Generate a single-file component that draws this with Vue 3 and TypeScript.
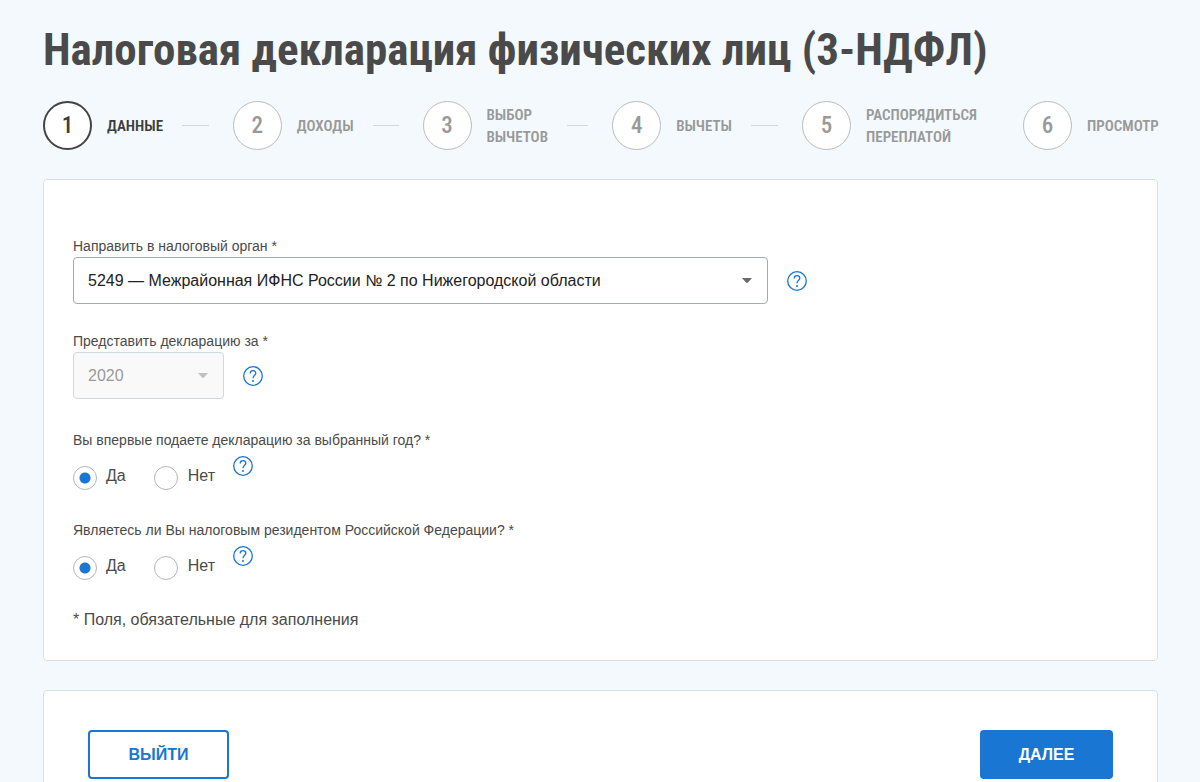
<script setup lang="ts">
import { ref } from 'vue'

interface Step {
  id: number
  lines: string[]
}

interface Question {
  name: string
  text: string
}

const steps: Step[] = [
  { id: 1, lines: ['Данные'] },
  { id: 2, lines: ['Доходы'] },
  { id: 3, lines: ['Выбор', 'вычетов'] },
  { id: 4, lines: ['Вычеты'] },
  { id: 5, lines: ['Распорядиться', 'переплатой'] },
  { id: 6, lines: ['Просмотр'] },
]

const questions: Question[] = [
  { name: 'first', text: 'Вы впервые подаете декларацию за выбранный год? *' },
  { name: 'resident', text: 'Являетесь ли Вы налоговым резидентом Российской Федерации? *' },
]

const current = ref(1)
const office = ref('5249')
const year = ref('2020')
const answers = ref<Record<string, string>>({ first: 'yes', resident: 'yes' })
</script>

<template>
  <main class="page">
    <h1 class="title">Налоговая декларация физических лиц (3-НДФЛ)</h1>

    <ol class="steps">
      <li v-for="step in steps" :key="step.id" class="step" :class="{ active: step.id === current }">
        <span class="circle">{{ step.id }}</span>
        <span class="name">
          <span v-for="line in step.lines" :key="line" class="name-line">{{ line }}</span>
        </span>
        <span v-if="step.id < 5" class="dash"></span>
      </li>
    </ol>

    <form class="card form" @submit.prevent>
      <div class="field">
        <label class="caption" for="office">Направить в налоговый орган *</label>
        <div class="row">
          <div class="select wide">
            <select id="office" v-model="office">
              <option value="5249">5249 — Межрайонная ИФНС России № 2 по Нижегородской области</option>
            </select>
            <svg class="arrow" viewBox="0 0 10 5" aria-hidden="true"><path d="M0 0h10L6 4.500Q5 5.300 4 4.500Z" /></svg>
          </div>
          <button type="button" class="help" aria-label="Справка">
            <svg viewBox="0 0 20 20" aria-hidden="true">
              <circle cx="10" cy="10" r="9.300" />
              <path d="M7.200 7.500C7.200 5.700 8.400 4.700 10 4.700s2.800 1 2.800 2.500C12.800 9.300 10 9.400 10 12.200" />
              <circle class="dot" cx="10" cy="14.900" r="1" />
            </svg>
          </button>
        </div>
      </div>

      <div class="field">
        <label class="caption" for="year">Представить декларацию за *</label>
        <div class="row">
          <div class="select narrow">
            <select id="year" v-model="year" disabled>
              <option value="2020">2020</option>
            </select>
            <svg class="arrow" viewBox="0 0 10 5" aria-hidden="true"><path d="M0 0h10L6 4.500Q5 5.300 4 4.500Z" /></svg>
          </div>
          <button type="button" class="help" aria-label="Справка">
            <svg viewBox="0 0 20 20" aria-hidden="true">
              <circle cx="10" cy="10" r="9.300" />
              <path d="M7.200 7.500C7.200 5.700 8.400 4.700 10 4.700s2.800 1 2.800 2.500C12.800 9.300 10 9.400 10 12.200" />
              <circle class="dot" cx="10" cy="14.900" r="1" />
            </svg>
          </button>
        </div>
      </div>

      <fieldset v-for="q in questions" :key="q.name" class="question">
        <legend class="caption">{{ q.text }}</legend>
        <div class="options">
          <label class="option">
            <input v-model="answers[q.name]" type="radio" :name="q.name" value="yes" />
            <span>Да</span>
          </label>
          <label class="option">
            <input v-model="answers[q.name]" type="radio" :name="q.name" value="no" />
            <span>Нет</span>
          </label>
          <button type="button" class="help" aria-label="Справка">
            <svg viewBox="0 0 20 20" aria-hidden="true">
              <circle cx="10" cy="10" r="9.300" />
              <path d="M7.200 7.500C7.200 5.700 8.400 4.700 10 4.700s2.800 1 2.800 2.500C12.800 9.300 10 9.400 10 12.200" />
              <circle class="dot" cx="10" cy="14.900" r="1" />
            </svg>
          </button>
        </div>
      </fieldset>

      <p class="note">* Поля, обязательные для заполнения</p>
    </form>

    <div class="card actions">
      <button type="button" class="btn outline">Выйти</button>
      <button type="button" class="btn primary">Далее</button>
    </div>
  </main>
</template>

<style>
body {
  background: #f3f9fc;
}
</style>

<style scoped>
* {
  box-sizing: border-box;
}

.page {
  padding: 20px 42px 0 43px;
  height: 100vh;
  overflow: hidden;
  font-family: "Liberation Sans", Arial, sans-serif;
  font-size: 16px;
  color: #4a4a4a;
}

.title {
  margin: 0;
  font-family: "Roboto Condensed", "Liberation Sans Narrow", "Liberation Sans", sans-serif;
  font-weight: 700;
  font-size: 45px;
  line-height: 60px;
  white-space: nowrap;
}

.steps {
  display: grid;
  grid-template-columns: repeat(4, 1fr) 221px 135px;
  margin: 21px 0 29px;
  padding: 0;
  list-style: none;
}

.step {
  display: flex;
  align-items: center;
  color: #999;
  font-family: "Roboto Condensed", "Liberation Sans Narrow", "Liberation Sans", sans-serif;
  font-weight: 500;
}

.circle {
  flex: none;
  display: flex;
  align-items: center;
  justify-content: center;
  width: 49px;
  height: 49px;
  border: 1px solid #bbb;
  border-radius: 50%;
  background: #fff;
  font-size: 23px;
}

.name {
  margin-left: 15px;
  font-size: 15px;
  font-weight: 600;
  line-height: 22px;
  text-transform: uppercase;
}

.name-line {
  display: block;
}

.dash {
  flex: 1;
  height: 1px;
  margin: 0 24px 0 19px;
  background: #d5d8da;
}

.active {
  color: #3d3d3d;
}

.active .circle {
  border: 2px solid #444;
}

.card {
  border: 1px solid #dcdfe0;
  border-radius: 4px;
  background: #fff;
}

.form {
  padding: 56px 29px 30px;
}

.field {
  margin-bottom: 27px;
}

.caption {
  display: block;
  padding: 0;
  margin-bottom: 1px;
  font-size: 14px;
  line-height: 20px;
}

.row {
  display: flex;
  align-items: center;
  gap: 19px;
}

.select {
  position: relative;
}

.wide {
  width: 695px;
}

.narrow {
  width: 151px;
}

.select select {
  display: block;
  width: 100%;
  height: 47px;
  padding: 0 40px 0 14px;
  border: 1px solid #a5abaf;
  border-radius: 4px;
  background: #fff;
  color: #222;
  font: inherit;
  appearance: none;
}

.select select:disabled {
  border-color: #d0d8dc;
  background: #f9f9f9;
  color: #999;
  opacity: 1;
}

.arrow {
  position: absolute;
  top: 21px;
  right: 16px;
  width: 10px;
  height: 5px;
  fill: #666b70;
  pointer-events: none;
}

select:disabled + .arrow {
  fill: #c0c0c0;
}

.help {
  width: 20px;
  height: 20px;
  padding: 0;
  border: 0;
  background: none;
  cursor: pointer;
}

.help svg {
  display: block;
  fill: none;
  stroke: #1976d2;
  stroke-width: 1.3;
}

.help .dot {
  fill: #1976d2;
  stroke: none;
}

.question {
  margin: 0;
  padding: 0 0 30px;
  border: 0;
}

.field + .question {
  margin-top: 31px;
}

.options {
  display: flex;
  align-items: flex-start;
  padding-top: 5px;
}

.option {
  display: flex;
  gap: 9px;
  margin: 10px 28px 0 0;
  line-height: 20px;
}

.option + .option {
  gap: 10px;
  margin-right: 18px;
}

.option input {
  width: 24px;
  height: 24px;
  margin: 0;
  border: 1px solid #b5b5b5;
  border-radius: 50%;
  background: #fff;
  appearance: none;
}

.option input:checked {
  background: radial-gradient(circle, #1976d2 5px, #fff 6px);
}

.note {
  margin: 0;
  line-height: 20px;
}

.actions {
  display: flex;
  justify-content: space-between;
  margin-top: 29px;
  padding: 39px 44px;
}

.btn {
  height: 49px;
  border: 2px solid #1976d2;
  border-radius: 4px;
  font: bold 16px/20px "Liberation Sans", Arial, sans-serif;
  text-transform: uppercase;
  cursor: pointer;
}

.outline {
  width: 141px;
  background: #fff;
  color: #1976d2;
}

.primary {
  width: 133px;
  background: #1976d2;
  color: #fff;
}
</style>
